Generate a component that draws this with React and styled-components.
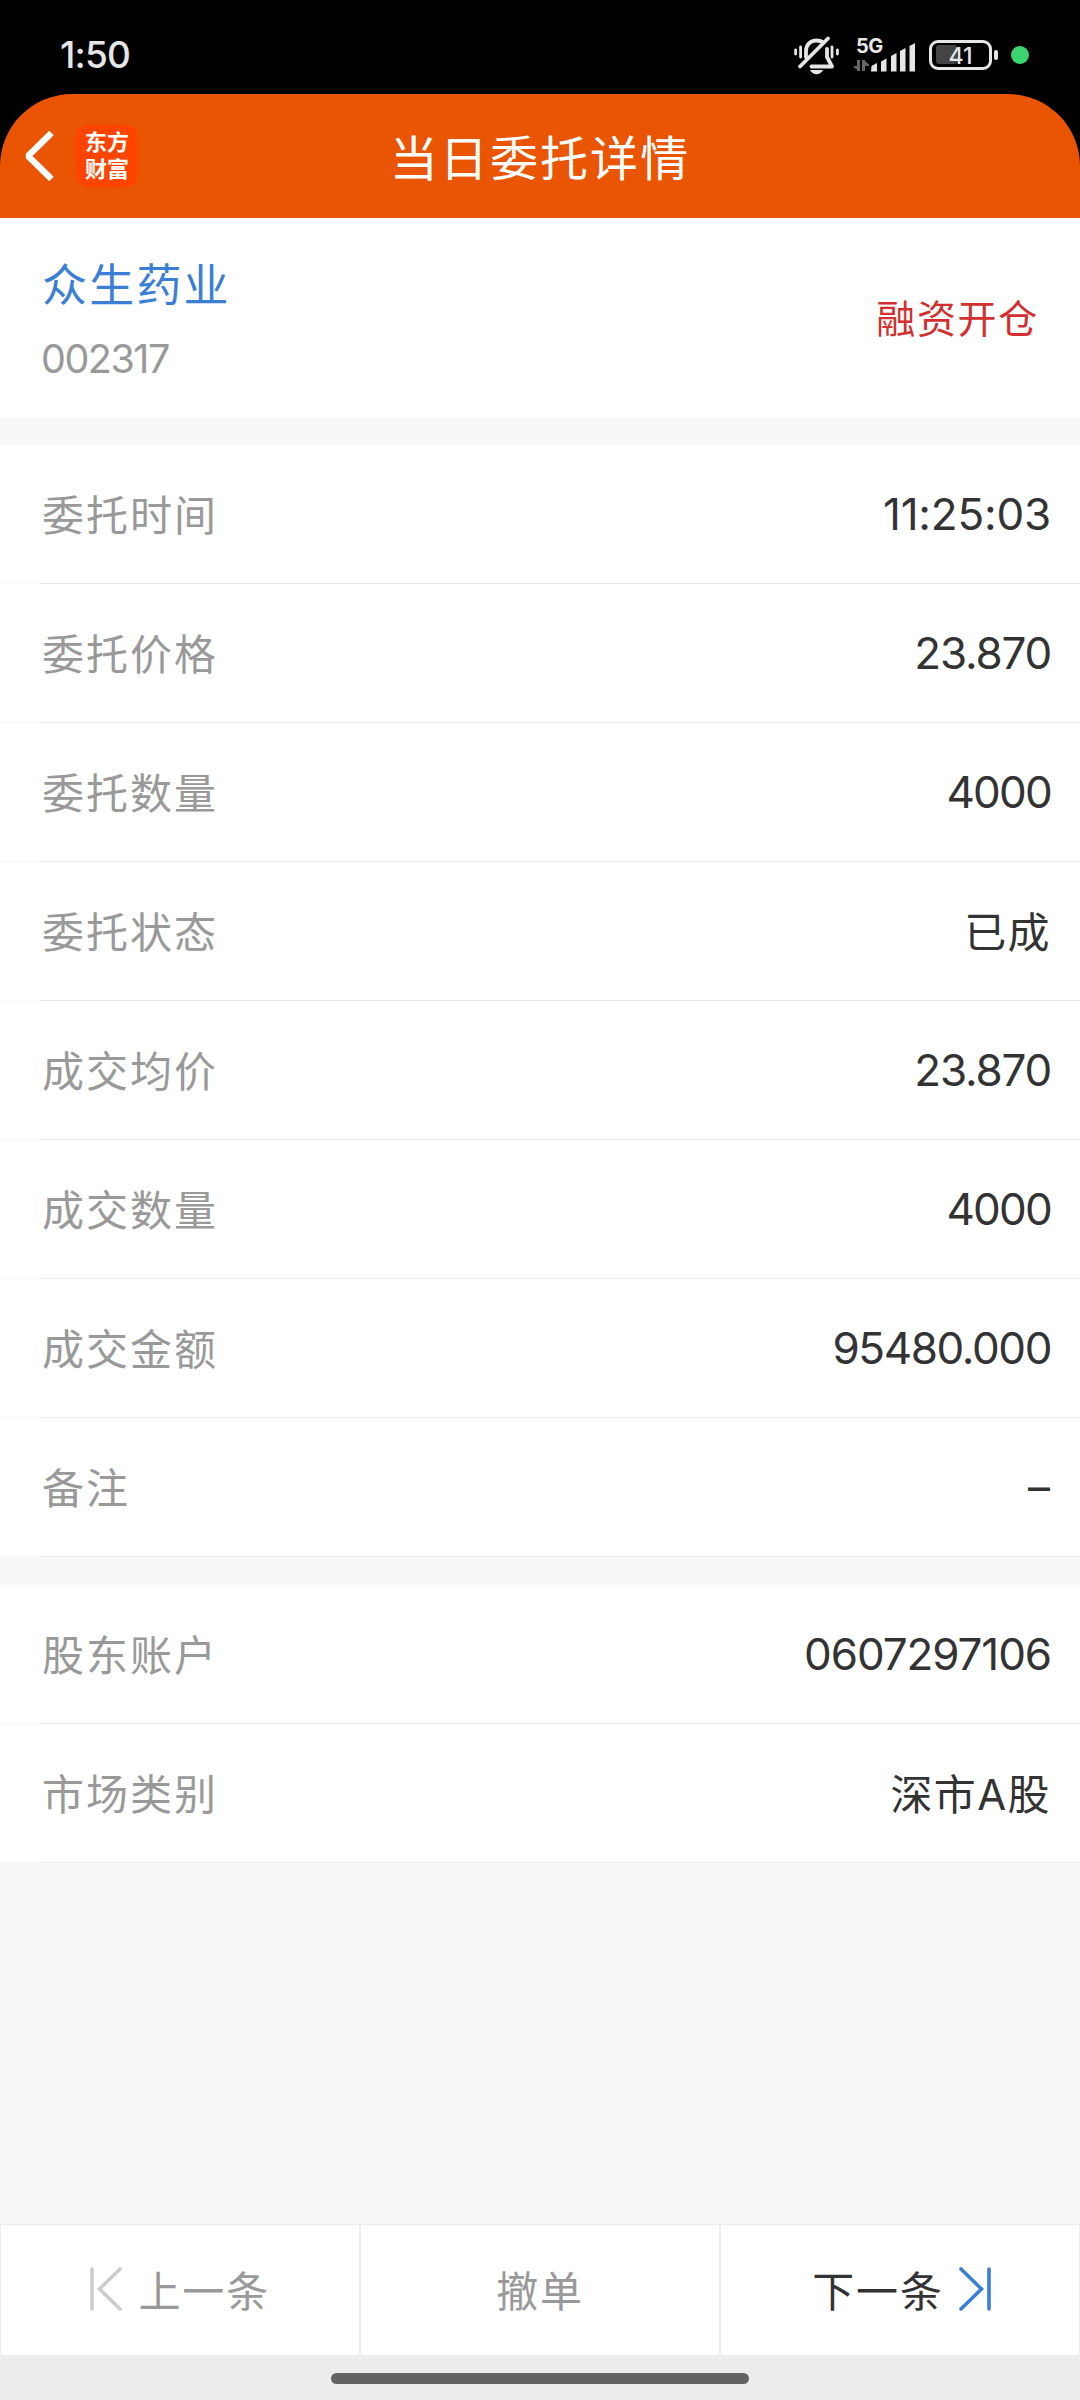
import React from "react";
import styled, { createGlobalStyle } from "styled-components";

const GlobalStyle = createGlobalStyle`
  *, *::before, *::after { box-sizing: border-box; }
  body { margin: 0; background: #000; }
`;

const cjk = `"Noto Sans CJK SC", sans-serif`;
const latin = `Inter, "Noto Sans CJK SC", sans-serif`;

const Screen = styled.div`
  display: flex;
  flex-direction: column;
  width: 1080px;
  height: 2400px;
  background: #000;
  font-family: ${cjk};
  overflow: hidden;
`;

const StatusBar = styled.div`
  flex: none;
  display: flex;
  align-items: center;
  height: 94px;
  padding: 15px 51px 0 60px;
  color: #e6e6e6;
`;

const Clock = styled.span`
  flex: 1;
  font: 500 37px/40px ${latin};
  letter-spacing: -0.8px;
`;

const StatusIcon = styled.svg`
  flex: none;
  display: block;
  overflow: visible;
  margin-left: ${(p) => p.$gap || 0}px;
`;

const RecordingDot = styled.span`
  width: 18px;
  height: 18px;
  margin-left: 13px;
  border-radius: 50%;
  background: #3ad56c;
`;

const Header = styled.header`
  flex: none;
  display: grid;
  grid-template-columns: 300px 1fr 300px;
  align-items: center;
  height: 124px;
  background: #ea5504;
  border-radius: 72px 72px 0 0;
`;

const HeaderLeft = styled.div`
  display: flex;
  align-items: center;
  padding-left: 24px;
  gap: 22px;
`;

const Logo = styled.div`
  width: 62px;
  height: 62px;
  padding: 2px 8px 0 9px;
  border-radius: 12px;
  background: #ff4400;
  color: #fff;
  font: 700 22px/27px ${cjk};
  word-break: break-all;
`;

const Title = styled.h1`
  margin: 0;
  padding-bottom: 3px;
  text-align: center;
  color: #fff;
  font: 400 48px/60px ${cjk};
  letter-spacing: 2.1px;
  white-space: nowrap;
`;

const Body = styled.main`
  flex: 1;
  display: flex;
  flex-direction: column;
  gap: 28px;
  background: #f7f8fa;
`;

const StockCard = styled.section`
  display: flex;
  align-items: center;
  justify-content: space-between;
  height: 199px;
  padding: 0 41px 0 42px;
  background: #fff;
`;

const StockInfo = styled.div`
  display: flex;
  flex-direction: column;
  gap: 22px;
`;

const StockName = styled.span`
  color: #3a7fd5;
  font: 400 45px/60px ${cjk};
  letter-spacing: 2.2px;
`;

const StockCode = styled.span`
  margin-left: -1px;
  color: #999;
  font: 400 39.5px/48px ${latin};
  letter-spacing: -1.5px;
`;

const TradeType = styled.span`
  padding-bottom: 3px;
  color: #d32f2f;
  font: 400 39px/56px ${cjk};
  letter-spacing: 1.7px;
`;

const Group = styled.section`
  background: #fff;
`;

const Row = styled.div`
  display: flex;
  align-items: center;
  justify-content: space-between;
  height: 139px;
  padding: 0 29px 0 42px;
  border-bottom: 1px solid #ebebeb;
  border-image: linear-gradient(to right, #f7f8fa 41px, #ebebeb 41px) 1;
`;

const Label = styled.span`
  padding-bottom: 3px;
  color: #999;
  font: 400 42px/60px ${cjk};
  letter-spacing: 2px;
`;

const Value = styled.span`
  color: #333;
  font: 400 44px/60px ${latin};
  letter-spacing: ${(p) => p.$tracking ?? -1.4}px;
`;

const TextValue = styled(Value)`
  padding-top: 3px;
  font-size: 42px;
  letter-spacing: 1.4px;
`;

const Footer = styled.nav`
  flex: none;
  display: grid;
  grid-template-columns: repeat(3, 1fr);
  height: 131px;
  background: #fff;
`;

const FooterButton = styled.button`
  display: flex;
  align-items: center;
  justify-content: center;
  gap: ${(p) => (p.$active ? 15 : 16.5)}px;
  margin: 0;
  padding: 0 0 2px ${(p) => (p.$active ? 3 : 0)}px;
  border: 1px solid #ededed;
  border-bottom: 0;
  background: #fff;
  color: ${(p) => (p.$active ? "#333" : "#999")};
  font: 400 42px/60px ${cjk};
  letter-spacing: 1.8px;
`;

const GestureArea = styled.div`
  flex: none;
  display: flex;
  justify-content: center;
  height: 45px;
  padding-top: 18px;
  background: #ededed;
`;

const GestureBar = styled.div`
  width: 418px;
  height: 11px;
  border-radius: 6px;
  background: #636363;
`;

const orderRows = [
  { label: "委托时间", value: "11:25:03", tracking: -0.2 },
  { label: "委托价格", value: "23.870", tracking: -1.2 },
  { label: "委托数量", value: "4000", tracking: -1.8 },
  { label: "委托状态", value: "已成", text: true },
  { label: "成交均价", value: "23.870", tracking: -1.2 },
  { label: "成交数量", value: "4000", tracking: -1.8 },
  { label: "成交金额", value: "95480.000" },
  { label: "备注", value: "–", tracking: 1 },
];

const accountRows = [
  { label: "股东账户", value: "0607297106", tracking: -1.1 },
  { label: "市场类别", value: "深市A股", text: true },
];

const MutedBell = () => (
  <StatusIcon width="46" height="40" viewBox="0 0 46 40" fill="none" stroke="#e6e6e6" strokeWidth="3.8" strokeLinecap="round">
    <path d="M1.600 15v4M6.600 12v10M38 12v10M43.400 15v4" strokeWidth="2.800" />
    <path d="M12 22V16.500c0-6.800 4.400-11 10.500-11 2.700 0 5 .7 6.800 2M33 14v8l5 9.500H17.500" strokeLinejoin="round" />
    <path d="M6 31.500L34 3.500" />
    <path d="M16 35h13c-1.300 2.600-3.500 4.200-6.500 4.200s-5.200-1.600-6.500-4.200z" fill="#e6e6e6" stroke="none" />
  </StatusIcon>
);

const Signal = () => (
  <StatusIcon $gap={13} width="64" height="44" viewBox="0 -4 64 44">
    <text x="3" y="16" fill="#e6e6e6" fontFamily="Inter, sans-serif" fontSize="20" fontWeight="700" letterSpacing="-.6">5G</text>
    <path d="M4 23h3v11H4zM0 29h5v3H3zM9 23h3v11H9zM12 24l4 3.500v1.500h-5z" fill="#666" />
    <g fill="#e6e6e6">
      <path d="M18.500 29l5.500-3v8.500h-6z" />
      <path d="M28 24.500l5.500-3v13H28z" />
      <path d="M38 19l5.500-3v18.500H38z" />
      <path d="M47 14l5.500-3v23.500H47z" />
      <path d="M56.500 9l5.500-3v28.500h-5.500z" />
    </g>
  </StatusIcon>
);

const Battery = () => (
  <StatusIcon $gap={12} width="69" height="30" viewBox="0 0 69 30">
    <rect x="1.500" y="1.500" width="60" height="27" rx="7.500" fill="none" stroke="#e6e6e6" strokeWidth="3" />
    <rect x="7" y="5" width="21" height="19" rx="3" fill="#444" />
    <rect x="65" y="10" width="4" height="10" rx="2" fill="#e6e6e6" />
    <text x="31.500" y="24" textAnchor="middle" fill="#e6e6e6" fontFamily="Inter, sans-serif" fontSize="23" fontWeight="500">41</text>
  </StatusIcon>
);

const Rows = ({ items }) => (
  <Group>
    {items.map(({ label, value, text, tracking }) => (
      <Row key={label}>
        <Label>{label}</Label>
        {text ? <TextValue>{value}</TextValue> : <Value $tracking={tracking}>{value}</Value>}
      </Row>
    ))}
  </Group>
);

export default function App() {
  return (
    <Screen>
      <GlobalStyle />
      <StatusBar>
        <Clock>1:50</Clock>
        <MutedBell />
        <Signal />
        <Battery />
        <RecordingDot />
      </StatusBar>
      <Header>
        <HeaderLeft>
          <svg width="30" height="50" viewBox="0 0 30 50" fill="none" stroke="#fff" strokeWidth="6.400" strokeLinejoin="bevel">
            <path d="M27.500 2L4 25l23.500 23" />
          </svg>
          <Logo>东方财富</Logo>
        </HeaderLeft>
        <Title>当日委托详情</Title>
      </Header>
      <Body>
        <StockCard>
          <StockInfo>
            <StockName>众生药业</StockName>
            <StockCode>002317</StockCode>
          </StockInfo>
          <TradeType>融资开仓</TradeType>
        </StockCard>
        <Rows items={orderRows} />
        <Rows items={accountRows} />
      </Body>
      <Footer>
        <FooterButton>
          <svg width="32" height="44" viewBox="0 0 32 44" fill="none" stroke="#ccc" strokeWidth="3.600" strokeLinecap="round">
            <path d="M2 2v40M30 2L9.500 22 30 42" />
          </svg>
          上一条
        </FooterButton>
        <FooterButton>撤单</FooterButton>
        <FooterButton $active>
          下一条
          <svg width="32" height="44" viewBox="0 0 32 44" fill="none" stroke="#3a7fd5" strokeWidth="3.600" strokeLinecap="round">
            <path d="M30 2v40M2 2l20.500 20L2 42" />
          </svg>
        </FooterButton>
      </Footer>
      <GestureArea>
        <GestureBar />
      </GestureArea>
    </Screen>
  );
}
